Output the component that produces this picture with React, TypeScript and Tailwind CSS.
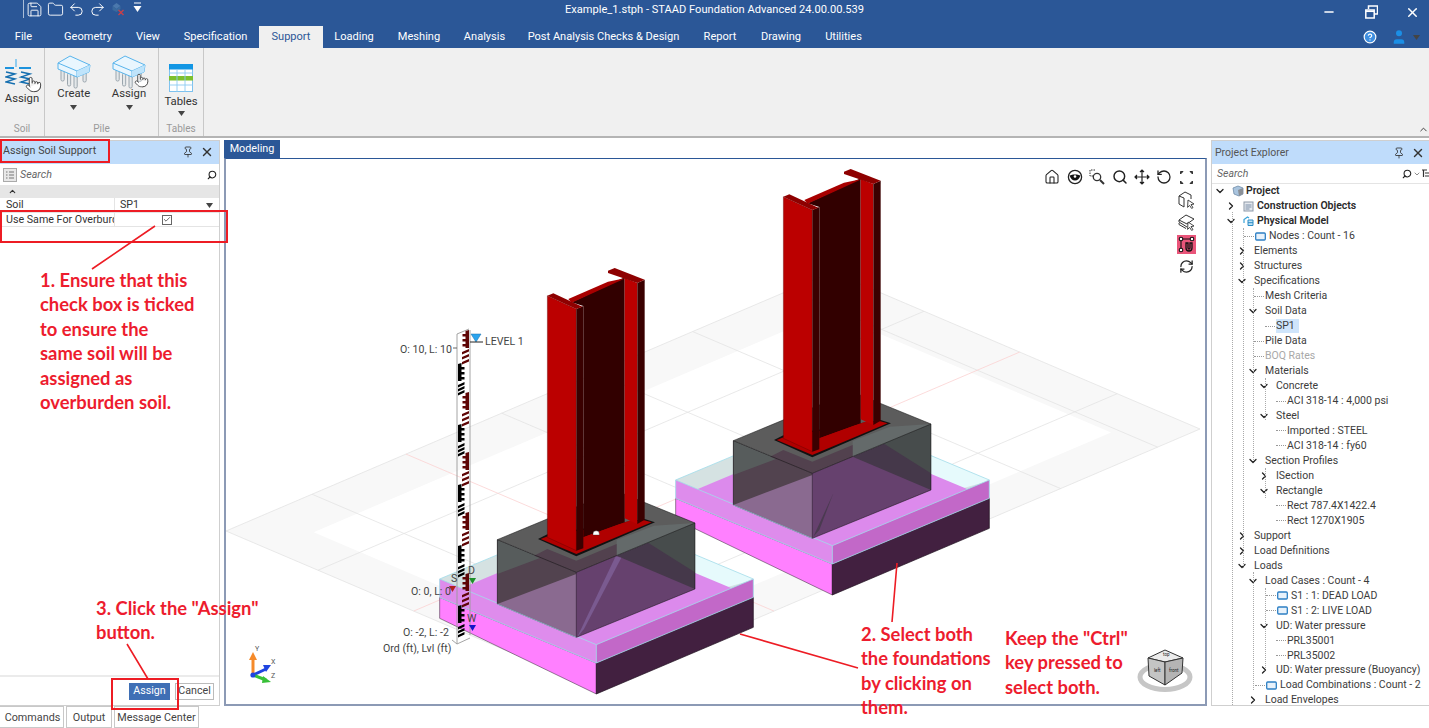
import React from "react";
import { Save, Folder, Undo2, Redo2, Pin, X, Minus, CircleHelp, User, Search, ChevronUp, ChevronRight, ChevronDown, Home, RotateCcw, RefreshCw, Check, Pointer } from "lucide-react";

const FONT = "font-['Roboto','Open_Sans',sans-serif]";

const tabs = [
  { t: "File", c: "w-[47px] mr-[5px]" },
  { t: "Geometry", c: "w-[72px]" },
  { t: "View", c: "w-[48px]" },
  { t: "Specification", c: "w-[87px]" },
];
const tabs2 = [
  { t: "Loading", c: "w-[62px]" },
  { t: "Meshing", c: "w-[68px]" },
  { t: "Analysis", c: "w-[63px]" },
  { t: "Post Analysis Checks & Design", c: "w-[175px]" },
  { t: "Report", c: "w-[58px]" },
  { t: "Drawing", c: "w-[64px]" },
  { t: "Utilities", c: "w-[61px]" },
];

type Row = { t: string; p: string; a?: "r" | "d"; dash?: boolean; icon?: "project" | "co" | "pm" | "box"; bold?: boolean; muted?: boolean; sel?: boolean };
const rows: Row[] = [
  { t: "Project", p: "pl-[3px]", a: "d", icon: "project", bold: true },
  { t: "Construction Objects", p: "pl-[14px]", a: "r", icon: "co", bold: true },
  { t: "Physical Model", p: "pl-[14px]", a: "d", icon: "pm", bold: true },
  { t: "Nodes : Count - 16", p: "pl-[26px]", dash: true, icon: "box" },
  { t: "Elements", p: "pl-[25px]", a: "r" },
  { t: "Structures", p: "pl-[25px]", a: "r" },
  { t: "Specifications", p: "pl-[25px]", a: "d" },
  { t: "Mesh Criteria", p: "pl-[36px]", dash: true },
  { t: "Soil Data", p: "pl-[36px]", a: "d" },
  { t: "SP1", p: "pl-[47px]", dash: true, sel: true },
  { t: "Pile Data", p: "pl-[36px]", dash: true },
  { t: "BOQ Rates", p: "pl-[36px]", dash: true, muted: true },
  { t: "Materials", p: "pl-[36px]", a: "d" },
  { t: "Concrete", p: "pl-[47px]", a: "d" },
  { t: "ACI 318-14 : 4,000 psi", p: "pl-[58px]", dash: true },
  { t: "Steel", p: "pl-[47px]", a: "d" },
  { t: "Imported : STEEL", p: "pl-[58px]", dash: true },
  { t: "ACI 318-14 : fy60", p: "pl-[58px]", dash: true },
  { t: "Section Profiles", p: "pl-[36px]", a: "d" },
  { t: "ISection", p: "pl-[47px]", a: "r" },
  { t: "Rectangle", p: "pl-[47px]", a: "d" },
  { t: "Rect 787.4X1422.4", p: "pl-[58px]", dash: true },
  { t: "Rect 1270X1905", p: "pl-[58px]", dash: true },
  { t: "Support", p: "pl-[25px]", a: "r" },
  { t: "Load Definitions", p: "pl-[25px]", a: "r" },
  { t: "Loads", p: "pl-[25px]", a: "d" },
  { t: "Load Cases : Count - 4", p: "pl-[36px]", a: "d" },
  { t: "S1 : 1: DEAD LOAD", p: "pl-[48px]", dash: true, icon: "box" },
  { t: "S1 : 2: LIVE LOAD", p: "pl-[48px]", dash: true, icon: "box" },
  { t: "UD: Water pressure", p: "pl-[47px]", a: "d" },
  { t: "PRL35001", p: "pl-[58px]", dash: true },
  { t: "PRL35002", p: "pl-[58px]", dash: true },
  { t: "UD: Water pressure (Buoyancy)", p: "pl-[47px]", a: "r" },
  { t: "Load Combinations : Count - 2", p: "pl-[37px]", dash: true, icon: "box" },
  { t: "Load Envelopes", p: "pl-[36px]", a: "r" },
];

const guides = [
  "left-[21px] top-[28px] h-[495px]",
  "left-[32px] top-[44px] h-[340px]",
  "left-[42px] top-[104px] h-[172px]",
  "left-[42px] top-[388px] h-[118px]",
  "left-[54px] top-[194px] h-[42px]",
  "left-[54px] top-[284px] h-[30px]",
  "left-[54px] top-[404px] h-[80px]",
];

function TreeIcon({ k }: { k: string }) {
  if (k === "box")
    return (
      <svg width="11" height="9" viewBox="0 0 11 9" className="shrink-0">
        <rect x="0.7" y="1" width="9.6" height="7" rx="1" fill="#e8f2fb" stroke="#2c7fc4" strokeWidth="1.3" />
      </svg>
    );
  if (k === "co")
    return (
      <svg width="11" height="11" viewBox="0 0 11 11" className="shrink-0">
        <rect x="1" y="1" width="9" height="9" fill="#e4e8ee" stroke="#8d99a8" />
        <path d="M2.5 4h6M2.5 6h6M2.5 8h4" stroke="#7a8fa8" />
      </svg>
    );
  if (k === "pm")
    return (
      <svg width="12" height="12" viewBox="0 0 12 12" className="shrink-0">
        <path d="M1 8V4.5L4.5 2 6 3" fill="none" stroke="#3aa3d8" strokeWidth="1.2" />
        <path d="M5 5h5v5.5H5z" fill="#bfe3f6" stroke="#2a8cc5" />
        <path d="M5 7.7h5" stroke="#2a8cc5" />
      </svg>
    );
  return (
    <svg width="12" height="12" viewBox="0 0 12 12" className="shrink-0">
      <path d="M1 3l5-2 5 2v6l-4 2-5-2z" fill="#a9c4de" stroke="#6f8ca8" strokeWidth="0.8" />
      <path d="M6 5l5-2v6l-4 2z" fill="#8a8f96" />
    </svg>
  );
}

function TreeRow({ r }: { r: Row }) {
  return (
    <div className={`flex h-[14.97px] items-center whitespace-nowrap ${r.p}`}>
      <div className="flex w-[18px] shrink-0 items-center">
        {r.a === "r" && <ChevronRight size={12} strokeWidth={2.6} className="text-[#222]" />}
        {r.a === "d" && <ChevronDown size={12} strokeWidth={2.6} className="text-[#222]" />}
        {r.dash && <div className="ml-[7px] w-[10px] border-t border-dotted border-[#999]" />}
      </div>
      {r.icon && (
        <div className="mr-[3px] flex w-[11px] justify-center">
          <TreeIcon k={r.icon} />
        </div>
      )}
      <span className={`text-[10.5px] leading-[14px] ${r.bold ? "font-semibold text-[#2a2a2a]" : r.muted ? "text-[#a8a8a8]" : "text-[#3c3c3c]"} ${r.sel ? "bg-[#cfe5fb] pr-[4px]" : ""}`}>{r.t}</span>
    </div>
  );
}

function PileCap({ hand }: { hand?: boolean }) {
  return (
    <div className="relative h-[34px] w-[34px]">
      <svg width="34" height="34" viewBox="0 0 34 34">
        <g stroke="#9aa5ad" strokeWidth="1" fill="#e4e8ea">
          <rect x="4" y="14" width="3.2" height="12" rx="1.4" />
          <rect x="10.5" y="18" width="3.2" height="13" rx="1.4" />
          <rect x="17" y="19" width="3.2" height="14" rx="1.4" />
          <rect x="26" y="15" width="3.2" height="12" rx="1.4" />
        </g>
        <path d="M1 8L13 1l20 9-1 7-12 5L1 14z" fill="#e9f6fe" stroke="#58b4ec" strokeWidth="1" />
        <path d="M1 8l19 8 13-6M20 16v6" fill="none" stroke="#58b4ec" strokeWidth="1" />
        <path d="M20 16l13-6-1 7-12 5z" fill="#bfe4fb" />
      </svg>
      {hand && <Pointer size={15} strokeWidth={1.4} fill="#fff" className="absolute bottom-[1px] right-[-3px] text-[#444]" />}
    </div>
  );
}

function SpringIcon() {
  return (
    <div className="relative h-[32px] w-[34px]">
      <svg width="30" height="30" viewBox="0 0 30 30">
        <path d="M11 0v8" stroke="#5cb8ee" strokeWidth="1.3" />
        <path d="M0 9h9M14 9h12" stroke="#1e93dd" strokeWidth="2.2" />
        <path d="M1 13l9 2-9 3 9 2-9 3 9 2M16 13l9 2-9 3 9 2-9 3 9 2" fill="none" stroke="#156fb0" strokeWidth="1.4" />
      </svg>
      <Pointer size={17} strokeWidth={1.4} fill="#fff" className="absolute bottom-[-2px] right-[-3px] text-[#444]" />
    </div>
  );
}

function TableIcon() {
  return (
    <svg width="24" height="28" viewBox="0 0 24 28">
      <rect x="0.5" y="0.5" width="23" height="27" fill="#fff" stroke="#7ec2ef" />
      <rect x="0" y="0" width="24" height="5.5" fill="#1296e4" />
      <rect x="0" y="12" width="24" height="4.5" fill="#7cc02d" />
      <path d="M0 9h24M0 21h24M8 5v23M16 5v23" stroke="#8ccbf2" strokeWidth="0.9" />
    </svg>
  );
}

const Caret = () => (
  <svg width="7" height="5" viewBox="0 0 7 5" className="block">
    <path d="M0 0h7L3.5 5z" fill="#444" />
  </svg>
);

function RibbonGroup({ label, w, children }: { label: string; w: string; children: React.ReactNode }) {
  return (
    <div className={`flex h-full flex-col border-r border-[#c8c8c8] ${w}`}>
      <div className="flex flex-1 justify-center">{children}</div>
      <div className="text-center text-[10px] leading-[14px] text-[#9a9a9a]">{label}</div>
    </div>
  );
}

function Ruler() {
  const segs: React.ReactNode[] = [];
  [330, 392, 452, 512, 573].forEach((y, i) =>
    segs.push(
      <g key={"r" + i} fill="#5e0505">
        <path d={`M465.5 ${y + 1}l3.5 -1v18h-3.5zM462.5 ${y + 4}h3v2.5h-3zM462.5 ${y + 9}h3v2.5h-3zM462.5 ${y + 14}h3v2.5h-3z`} />
        <path d={`M462 ${y + 22}l7 -3v2.5l-7 3zM462 ${y + 27}l7 -3v2.5l-7 3zM462 ${y + 32}l7 -3v2.5l-7 3z`} />
      </g>
    )
  );
  [363, 424, 484, 545, 605].forEach((y, i) =>
    segs.push(
      <g key={"b" + i} fill="#000">
        <path d={`M458 ${y + 1}l3.5 -1v18H458zM461.5 ${y + 4}h3v2.5h-3zM461.5 ${y + 9}h3v2.5h-3zM461.5 ${y + 14}h3v2.5h-3z`} />
        <path d={`M458 ${y + 22}l6.5 -3v2.5l-6.5 3zM458 ${y + 26}l6.5 -3v2.5l-6.5 3zM458 ${y + 30}l6.5 -3v2.5l-6.5 3z`} />
      </g>
    )
  );
  return (
    <g>
      <path d="M457 334v310M470 330v305" stroke="#9a9a9a" strokeWidth="0.9" fill="none" />
      <path d="M457 334l12 -5M452 640l5 4 13 -6" stroke="#9a9a9a" strokeWidth="0.9" fill="none" />
      {segs}
      <path d="M471 334h10l-5 8z" fill="#2aa4ee" stroke="#1b6fa8" strokeWidth="0.5" />
      <path d="M470 342h13" stroke="#222" strokeWidth="1" />
      <path d="M453 348h4" stroke="#666" strokeWidth="1" />
      <path d="M449 586h7l-3.5 6z" fill="#b02020" />
      <path d="M469 578h7l-3.5 6z" fill="#1d8f2a" />
      <path d="M469 625h7l-3.5 6z" fill="#1515c8" />
      <g fontSize="10.6" fill="#444" fontFamily="Roboto,sans-serif">
        <text x="400" y="353">O: 10, L: 10</text>
        <text x="485" y="345">LEVEL 1</text>
        <text x="411" y="595">O: 0, L: 0</text>
        <text x="403" y="636">O: -2, L: -2</text>
        <text x="383" y="652">Ord (ft), Lvl (ft)</text>
        <text x="451" y="582">S</text>
        <text x="468" y="574">D</text>
        <text x="467" y="622">W</text>
      </g>
    </g>
  );
}

function Foundation({ dx, dy, spike, spikeFill, dot }: { dx: number; dy: number; spike: string; spikeFill: string; dot?: boolean }) {
  return (
    <g transform={`translate(${670 + dx} ${160 + dy}) scale(0.33333)`}>
      <polygon points="17,960 487,763 958,960 487,1157" fill="#e6fafc" />
      <polygon points="17,960 190,888 190,945 17,1015" fill="#d5e2e2" />
      <polygon points="860,990 958,962 958,1015 900,990" fill="#d5e2e2" />
      <polygon points="17,1015 487,818 958,1015 487,1212" fill="#dc8aec" />
      <polygon points="17,1015 487,1212 487,1305 17,1078" fill="#ff80ff" stroke="#2a1a2a" strokeWidth="1.5" />
      <polygon points="487,1212 958,1015 958,1105 487,1305" fill="#422040" stroke="#1a0a1a" strokeWidth="2" />
      <polygon points="17,960 487,1157 487,1212 17,1015" fill="#de8cec" />
      <polygon points="487,1157 958,960 958,1015 487,1212" fill="#c268c8" />
      <path d="M17 960L487 763 958 960 487 1157zM17 960v55l470 197 471 -197v-55M487 1157v55" fill="none" stroke="#a2dcea" strokeWidth="2.4" />
      <polygon points="190,842 427,940 427,1135 190,1035" fill="#8a6a90" />
      <polygon points="190,842 427,940 427,945 190,1035" fill="#52434f" />
      <polygon points="190,842 320,896 190,945" fill="#575c5c" />
      <polygon points="427,940 783,792 783,990 427,1135" fill="#66416e" />
      <polygon points="548,890 783,792 783,990" fill="#45384a" />
      <polygon points="640,850 783,792 783,940" fill="#474c4c" />
      <polygon points="190,842 545,695 783,792 427,940" fill="#5c5c5c" />
      <polygon points="548,843 660,800 783,792 548,890" fill="#646a6a" />
      <polygon points="190,842 427,940 300,890 340,870 427,905 548,855 548,890 427,940" fill="#52414e" />
      <polygon points={spike} fill={spikeFill} />
      <path d="M190 842L545 695 783 792 427 940zM190 842v193l237 100 356 -145V792M427 940v195" fill="none" stroke="#111" strokeWidth="1.6" />
      <path d="M190 1035l237 100" stroke="#a2dcea" strokeWidth="2" />
      <polygon points="312,840 340,826 632,780 663,790 427,892" fill="#111" />
      <polygon points="320,840 345,830 625,782 653,790 427,885" fill="#b00000" />
      <polygon points="413,130 572,55 572,790 448,835 448,141" fill="#320000" />
      <polygon points="448,835 600,780 612,795 450,868" fill="#b00000" />
      <polygon points="340,110 427,150 427,875 340,835" fill="#bb0000" stroke="#300" strokeWidth="0.8" />
      <polygon points="427,150 448,141 448,868 427,875" fill="#3a0000" />
      <polygon points="572,57 610,72 610,795 572,778" fill="#bb0000" />
      <polygon points="610,72 632,62 632,782 610,795" fill="#3a0000" />
      <polygon points="403,120 522,68 576,57 413,131" fill="#a80000" />
      <polygon points="340,110 358,103 445,143 427,150" fill="#8e0000" />
      <polygon points="522,35 542,27 632,62 610,72 522,42" fill="#8e0000" />
      {dot && <path d="M477 825a9.500 9.500 0 0 1 19 0v3h-19z" fill="#fff" stroke="#222" strokeWidth="1" />}
    </g>
  );
}

function Ground() {
  const A: [number, number] = [226, 531];
  const u: [number, number] = [606, -259];
  const v: [number, number] = [368, 157];
  const P = (s: number, t: number) => `${A[0] + s * u[0] + t * v[0]},${A[1] + s * u[1] + t * v[1]}`;
  const L = (k: string, s1: number, t1: number, s2: number, t2: number, c: string) => (
    <polyline key={k} points={`${P(s1, t1)} ${P(s2, t2)}`} stroke={c} strokeWidth="0.8" fill="none" />
  );
  const grey = "#e3e3e3";
  return (
    <g>
      <polygon points={`${P(0, 0)} ${P(1, 0)} ${P(1, 1)} ${P(0, 1)}`} fill="#f8f8f8" stroke={grey} strokeWidth="0.8" />
      <polygon points={`${P(0.07, 0.123)} ${P(0.92, 0.123)} ${P(0.92, 0.89)} ${P(0.07, 0.89)}`} fill="#fff" />
      {[0.142, 0.455, 0.61, 0.77, 0.93].map((s) => L("s" + s, s, 0, s, 1, grey))}
      {[0.25, 0.775].map((t) => L("t" + t, 0, t, 1, t, grey))}
      {L("rs", 0.297, 0, 0.297, 1, "#fbd2d2")}
      {L("rt", 0, 0.51, 1, 0.51, "#fbd2d2")}
    </g>
  );
}

function Triad() {
  return (
    <g>
      <path d="M253 676v-18" stroke="#f58a2a" strokeWidth="3" />
      <path d="M249 660l4 -8 4 8z" fill="#f58a2a" />
      <path d="M253 675l13 -6" stroke="#1f44e0" strokeWidth="3" />
      <path d="M263 665l8 0 -5 7z" fill="#1f44e0" />
      <path d="M253 675l13 5" stroke="#38c038" strokeWidth="3" />
      <path d="M263 676l8 6 -9 1z" fill="#38c038" />
      <circle cx="253" cy="675" r="2.6" fill="#1f44e0" />
      <g fontSize="7" fill="#555" fontFamily="Roboto,sans-serif">
        <text x="255" y="651">Y</text>
        <text x="271" y="664">X</text>
        <text x="271" y="678">Z</text>
      </g>
    </g>
  );
}

function ViewCube() {
  return (
    <g>
      <ellipse cx="1165" cy="677" rx="25" ry="12.5" fill="none" stroke="#c6c6c6" strokeWidth="5" />
      <polygon points="1148,658 1165,650 1183,658 1165,662" fill="#ececec" stroke="#333" strokeWidth="1" />
      <polygon points="1148,658 1165,662 1165,685 1149,676" fill="#c4c4c4" stroke="#333" strokeWidth="1" />
      <polygon points="1165,662 1183,658 1182,673 1165,685" fill="#b4b4b4" stroke="#333" strokeWidth="1" />
      <g fontSize="4.5" fill="#222" fontFamily="Roboto,sans-serif">
        <text x="1163" y="656">top</text>
        <text x="1154" y="672">left</text>
        <text x="1169" y="672">front</text>
      </g>
    </g>
  );
}

const ToolI = ({ children }: { children: React.ReactNode }) => <div className="flex h-[22.4px] w-[22.4px] items-center justify-center text-[#222]">{children}</div>;

function CanvasTools() {
  return (
    <div className="absolute right-[7px] top-[7px] flex flex-col items-end">
      <div className="flex">
        <ToolI><Home size={16} strokeWidth={1.6} /></ToolI>
        <ToolI>
          <svg width="16" height="16" viewBox="0 0 16 16"><circle cx="8" cy="8" r="6.6" fill="#fff" stroke="#222" strokeWidth="1.3" /><path d="M2.500 6.500c3-1.500 8-1.500 11 0-1 3-3 5-5.500 5S3.500 9.500 2.500 6.500z" fill="#111" /><circle cx="8" cy="7.500" r="1.300" fill="#fff" /></svg>
        </ToolI>
        <ToolI>
          <svg width="16" height="16" viewBox="0 0 16 16" fill="none" stroke="#333"><path d="M6 1H1v6h3" strokeWidth="1" strokeDasharray="1.5 1" /><circle cx="8" cy="8" r="3.7" strokeWidth="1.3" /><path d="M11 11l4 4" strokeWidth="2" /></svg>
        </ToolI>
        <ToolI><Search size={16} strokeWidth={2.2} /></ToolI>
        <ToolI>
          <svg width="16" height="16" viewBox="0 0 16 16" fill="none" stroke="#222" strokeWidth="1.2"><path d="M8 1v14M1 8h14" /><path d="M6 3l2-2 2 2M6 13l2 2 2-2M3 6L1 8l2 2M13 6l2 2-2 2" fill="#222" /></svg>
        </ToolI>
        <ToolI><RotateCcw size={16} strokeWidth={1.9} /></ToolI>
        <ToolI>
          <svg width="15" height="15" viewBox="0 0 15 15" fill="none" stroke="#333" strokeWidth="1"><path d="M1.500 4V1.500H4L1.500 4zM13.500 4V1.500H11l2.500 2.500zM1.500 11v2.500H4L1.500 11zM13.500 11v2.500H11l2.500-2.500z" fill="#333" /></svg>
        </ToolI>
      </div>
      <ToolI>
        <svg width="18" height="18" viewBox="0 0 18 18" fill="none" stroke="#333"><path d="M1 5l6-4 6 3v4M1 5v8l5 3M1 5l5 2v9" strokeWidth="1" /><path d="M10 9l6 4-3 .6 2 3-1.4.8-2-3-2 2z" fill="#fff" strokeWidth="0.9" /></svg>
      </ToolI>
      <ToolI>
        <svg width="18" height="18" viewBox="0 0 18 18" fill="none" stroke="#333" strokeWidth="1"><path d="M1 7l7-5 8 4-7 5zM1 7v2l8 5M1 10v1.5l7 4" /><path d="M10 9l6 4-3 .6 2 3-1.4.8-2-3-2 2z" fill="#fff" strokeWidth="0.9" /></svg>
      </ToolI>
      <ToolI>
        <div className="flex h-[19px] w-[19px] items-center justify-center bg-[#e9557a]">
          <svg width="17" height="17" viewBox="0 0 17 17" fill="none" stroke="#111" strokeWidth="1.1"><path d="M3 3h11M3 3v11" /><circle cx="3" cy="3" r="1.8" fill="#fff" /><circle cx="14" cy="3" r="1.8" fill="#fff" /><circle cx="3" cy="14" r="1.8" fill="#fff" /><path d="M8 7v5a3 3 0 0 0 6 0V7h-2v5a1 1 0 0 1-2 0V7z" fill="#e9557a" strokeWidth="1.3" /></svg>
        </div>
      </ToolI>
      <ToolI><RefreshCw size={15} strokeWidth={2} /></ToolI>
    </div>
  );
}

function Note({ className, lines }: { className: string; lines: string[] }) {
  return (
    <div className={`pointer-events-none absolute whitespace-nowrap font-['Lato',sans-serif] text-[18.4px] font-bold leading-[24.4px] text-[#ed1c2e] ${className}`}>
      {lines.map((l) => (
        <div key={l}>{l}</div>
      ))}
    </div>
  );
}

export default function App() {
  return (
    <div className={`relative flex h-[728px] w-[1429px] flex-col overflow-hidden bg-white ${FONT}`}>
      {/* title bar */}
      <div className="relative flex h-[26px] items-center bg-[#2b5797] text-white">
        <div className="mb-[8px] ml-[23px] flex h-[18px] items-center gap-[4px] border-l border-[#a9bdd8] pl-[2px]">
          <Save size={17} strokeWidth={1.3} />
          <Folder size={17} strokeWidth={1.3} />
          <Undo2 size={17} strokeWidth={1.4} />
          <Redo2 size={17} strokeWidth={1.4} />
          <svg width="17" height="16" viewBox="0 0 16 16"><path d="M2 5l4-3 4 3-4 3z" fill="#4b78ad" /><path d="M2 5v4l4 2V8zM10 5v3l-4 3V8z" fill="#3a6a9e" /><path d="M8 9l5 5M13 9l-5 5" stroke="#c8404a" strokeWidth="1.4" /></svg>
          <svg width="9" height="14" viewBox="0 0 9 14" className="ml-[2px]"><path d="M1 1h7" stroke="#fff" /><path d="M0.5 4h8L4.5 10z" fill="#fff" /></svg>
        </div>
        <div className="absolute inset-x-0 top-[2px] text-center text-[11.1px] leading-[15px] text-white">Example_1.stph - STAAD Foundation Advanced 24.00.00.539</div>
        <div className="ml-auto mr-[-5px] flex items-center pb-[2px]">
          <div className="flex w-[42px] justify-center"><Minus size={14} strokeWidth={2.4} /></div>
          <div className="flex w-[42px] justify-center">
            <svg width="13" height="14" viewBox="0 0 13 14" fill="none" stroke="#fff" strokeWidth="1.5"><path d="M3.500 4V1h9v8H9" /><path d="M0.800 5h8.400v8H0.800z" /><path d="M1 6.300h8" /></svg>
          </div>
          <div className="flex w-[42px] justify-center pr-[2px]"><X size={15} strokeWidth={2.4} /></div>
        </div>
      </div>
      {/* tabs */}
      <div className="flex h-[22px] items-stretch bg-[#2b5797] text-[11.05px] text-white">
        {tabs.map((x) => (
          <div key={x.t} className={`flex items-center justify-center pt-px ${x.c}`}>{x.t}</div>
        ))}
        <div className="flex w-[64px] items-center justify-center bg-[#f0f0f0] pt-px text-[#2b5797]">Support</div>
        {tabs2.map((x) => (
          <div key={x.t} className={`flex items-center justify-center pt-px ${x.c}`}>{x.t}</div>
        ))}
        <div className="ml-auto flex items-center pr-[9px]">
          <CircleHelp size={14} strokeWidth={2} fill="#3f8fe0" className="mr-[13px] text-white" />
          <User size={18} strokeWidth={0} fill="#1b8fe6" className="mr-[5px]" />
          <Caret />
        </div>
      </div>
      {/* ribbon */}
      <div className="relative flex h-[90px] shrink-0 items-stretch border-b-2 border-[#b4b4b4] bg-[#f0f0f0] text-[11.3px] text-[#333]">
        <RibbonGroup label="Soil" w="w-[45px]">
          <div className="flex flex-col items-center pt-[11px]">
            <SpringIcon />
            <div className="leading-[15px]">Assign</div>
          </div>
        </RibbonGroup>
        <RibbonGroup label="Pile" w="w-[114px]">
          <div className="flex gap-[21px] pt-[7px]">
            <div className="flex flex-col items-center">
              <PileCap />
              <div className="mt-[-3px] leading-[15px]">Create</div>
              <div className="mt-[4px]"><Caret /></div>
            </div>
            <div className="flex flex-col items-center">
              <PileCap hand />
              <div className="mt-[-3px] leading-[15px]">Assign</div>
              <div className="mt-[4px]"><Caret /></div>
            </div>
          </div>
        </RibbonGroup>
        <RibbonGroup label="Tables" w="w-[45px]">
          <div className="flex flex-col items-center pt-[16px]">
            <TableIcon />
            <div className="mt-[2px] leading-[15px]">Tables</div>
            <div className="mt-[2px]"><Caret /></div>
          </div>
        </RibbonGroup>
        <ChevronUp size={11} strokeWidth={2} className="absolute bottom-[1px] right-0 text-[#333]" />
      </div>
      {/* main */}
      <div className="flex h-[568px] shrink-0 gap-[4px] pt-[2px] text-[#333]">
        {/* left */}
        <div className="flex h-[566px] w-[220px] shrink-0 flex-col border border-l-0 border-[#cfcfcf] text-[10.7px]">
          <div className="flex h-[23px] shrink-0 items-center bg-[#bfdcfb] pb-[2px] pl-[3px] text-[#444]">
            <span className="flex-1">Assign Soil Support</span>
            <Pin size={12} strokeWidth={1.7} className="mr-[6px] text-[#333]" />
            <X size={14} strokeWidth={2.4} className="mr-[5px] text-[#333]" />
          </div>
          <div className="flex h-[21px] shrink-0 items-center pl-[3px] pr-[2px] pt-px">
            <svg width="14" height="14" viewBox="0 0 14 14" className="mr-[3px]"><rect x="0.5" y="0.5" width="13" height="13" fill="#e8e8e8" stroke="#aaa" /><path d="M3 4h1.500M6 4h5M3 7h1.500M6 7h5M3 10h1.500M6 10h5" stroke="#777" /></svg>
            <span className="flex-1 italic text-[#666]">Search</span>
            <Search size={10} strokeWidth={2.6} className="-scale-x-100 text-[#222]" />
          </div>
          <div className="flex h-[13px] shrink-0 items-center bg-[#e6e6e6] pl-[8px]">
            <ChevronUp size={9} strokeWidth={3} className="text-[#333]" />
          </div>
          <div className="flex h-[15px] shrink-0 items-center border-b border-[#e4e4e4] leading-[14px]">
            <div className="w-[115px] border-r border-[#e4e4e4] pl-[6px]">Soil</div>
            <div className="flex-1 pl-[5px]">SP1</div>
            <div className="pr-[6px]"><Caret /></div>
          </div>
          <div className="flex h-[14px] shrink-0 items-center border-b border-[#e4e4e4] leading-[14px]">
            <div className="w-[115px] overflow-hidden whitespace-nowrap border-r border-[#e4e4e4] pl-[6px]">Use Same For Overburden</div>
            <div className="flex flex-1 justify-center">
              <div className="flex h-[10px] w-[10px] items-center justify-center border border-[#666] bg-white">
                <Check size={9} strokeWidth={2.2} className="text-[#333]" />
              </div>
            </div>
          </div>
          <div className="flex-1" />
          <div className="flex h-[30px] shrink-0 items-start justify-end gap-[5px] border-t-2 border-[#ebebeb] pr-[5px] pt-[6px]">
            <div className="flex h-[17px] w-[41px] items-center justify-center bg-[#3f6fb5] text-white">Assign</div>
            <div className="flex h-[17px] w-[39px] items-center justify-center border border-[#bbb] bg-white text-[#444]">Cancel</div>
          </div>
        </div>
        {/* center */}
        <div className="flex h-[566px] w-[983px] shrink-0 flex-col">
          <div className="flex h-[18px] shrink-0 items-center">
            <div className="flex h-full w-[56px] items-center justify-center bg-[#2b5797] text-[10.8px] text-white">Modeling</div>
          </div>
          <div className="relative flex-1 overflow-hidden border-2 border-t border-[#8c9ab5] border-t-[#2b5797]">
            <svg className="absolute left-0 top-0 block" width="980" height="547" viewBox="226 159 980 547">
              <Ground />
              <Foundation dx={0} dy={0} spike="430,1130 490,1000 448,1110" spikeFill="#4a3a50" />
              <Foundation dx={-236} dy={99} spike="430,1134 545,892 562,896 450,1110" spikeFill="#7a5a90" dot />
              <Ruler />
              <Triad />
              <ViewCube />
            </svg>
            <CanvasTools />
          </div>
        </div>
        {/* right */}
        <div className="flex h-[566px] w-[219px] shrink-0 flex-col border border-r-0 border-[#cfcfcf] text-[10.5px]">
          <div className="flex h-[23px] shrink-0 items-center bg-[#bfdcfb] pl-[3px] text-[#555]">
            <span className="flex-1">Project Explorer</span>
            <Pin size={12} strokeWidth={1.7} className="mr-[6px] text-[#333]" />
            <X size={14} strokeWidth={2.4} className="mr-[5px] text-[#333]" />
          </div>
          <div className="flex h-[20px] shrink-0 items-center border-b border-[#e4e4e4] pl-[5px] pr-[1px]">
            <span className="flex-1 italic text-[#666]">Search</span>
            <Search size={10} strokeWidth={2.6} className="-scale-x-100 text-[#222]" />
            <ChevronDown size={8} className="mx-[1px] text-[#555]" />
            <svg width="7" height="9" viewBox="0 0 7 9"><path d="M0 1h5M1.500 1v7M3 4h4M3 7h4" stroke="#333" strokeWidth="1.2" /></svg>
          </div>
          <div className="relative -ml-px flex-1 overflow-hidden">
            {guides.map((g) => (
              <div key={g} className={`absolute w-0 border-l border-dotted border-[#aaa] ${g}`} />
            ))}
            {rows.map((r) => (
              <TreeRow key={r.t + r.p} r={r} />
            ))}
          </div>
        </div>
      </div>
      {/* bottom tabs */}
      <div className="flex h-[22px] items-stretch gap-[2px] text-[10.8px] text-[#444]">
        <div className="flex w-[64px] items-center justify-center border border-l-0 border-[#c8c8c8] pl-[2px] pt-[3px]">Commands</div>
        <div className="flex w-[46px] items-center justify-center border border-[#c8c8c8] pt-[3px]">Output</div>
        <div className="flex w-[85px] items-center justify-center border border-[#c8c8c8] pt-[3px]">Message Center</div>
      </div>

      {/* instruction overlays */}
      <div className="pointer-events-none absolute left-0 top-[139px] h-[24px] w-[110px] border-2 border-[#ed1c24]" />
      <div className="pointer-events-none absolute left-0 top-[210px] h-[33px] w-[228px] border-2 border-[#ed1c24]" />
      <div className="pointer-events-none absolute left-[111px] top-[678px] h-[32px] w-[68px] border-2 border-[#ed1c24]" />
      <svg className="pointer-events-none absolute left-0 top-0" width="1429" height="728">
        <path d="M155 226L92 269M127 644L148 679M740 634L858 668M897 563L892 622" stroke="#ed1c24" strokeWidth="1.6" fill="none" />
      </svg>
      <Note className="left-[40px] top-[268px]" lines={["1. Ensure that this", "check box is ticked", "to ensure the", "same soil will be", "assigned as", "overburden soil."]} />
      <Note className="left-[96px] top-[596px]" lines={['3. Click the "Assign"', "button."]} />
      <Note className="left-[861px] top-[622px]" lines={["2. Select both", "the foundations", "by clicking on", "them."]} />
      <Note className="left-[1005px] top-[626px]" lines={['Keep the "Ctrl"', "key pressed to", "select both."]} />
    </div>
  );
}
